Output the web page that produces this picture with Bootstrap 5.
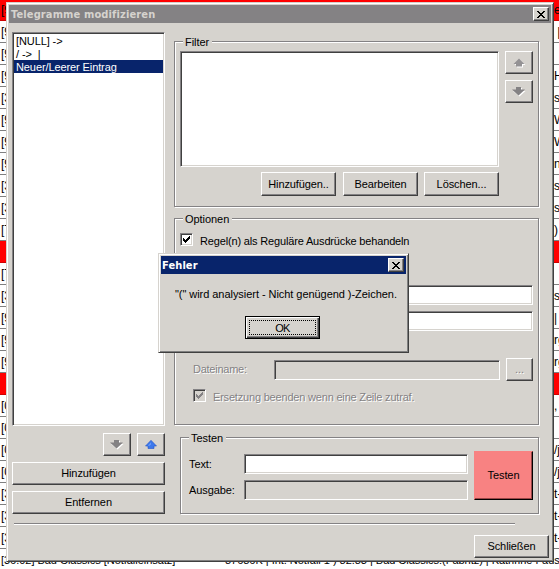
<!DOCTYPE html>
<html lang="de">
<head>
<meta charset="utf-8">
<title>Telegramme modifizieren</title>
<link href="https://cdn.jsdelivr.net/npm/bootstrap@5.3.0/dist/css/bootstrap.min.css" rel="stylesheet">
<style>
body{width:559px;height:569px;background:#fff;color:#000;font:11px/13px "Liberation Sans",Arial,sans-serif;letter-spacing:-.16px}
.log{height:569px}
.log-row{height:22px;border-bottom:1px solid #808080;padding:4px 0 0 1px;font-size:12px;line-height:14px;white-space:pre;flex:none;letter-spacing:0}
.log-row:first-child{height:21px;padding-top:3px}
.log-row.alarm{background:#f00;border-color:#d00000}
.log-row:last-child{border:0;font-size:11px;letter-spacing:-.03px}
.lead-cell{width:224px;flex:none}
.tail-cell{width:5px;overflow:visible}
.win{background:#d6d3ce;border:1px solid;border-color:#d6d3ce #404040 #404040 #d6d3ce;box-shadow:inset 1px 1px 0 #fff,inset -1px -1px 0 #808080;padding:2px}
.main-win{left:6px;top:2px;width:548px;height:560px}
.err-win{left:158px;top:253px;width:251px;height:100px}
.bar{height:18px;background:#848284;color:#d6d3ce;font:bold 11px/17px "DejaVu Sans Condensed","DejaVu Sans",sans-serif;letter-spacing:.13px;padding:0 2px 0 2px}
.bar.active{background:#08246b;color:#fff;letter-spacing:.1px;padding-left:1px}
.key{background:#d6d3ce;color:#000;border:1px solid;border-color:#fff #404040 #404040 #fff;box-shadow:inset -1px -1px 0 #848284;border-radius:0;padding:0;font:inherit;letter-spacing:-.1px;height:23px;display:flex;align-items:center;justify-content:center;flex:none}
.key-x{width:16px;height:14px}
.key-arrow{width:28px}
.key-mid{width:75px;height:24px}
.key-dots{width:27px;color:#848284;text-shadow:1px 1px 0 #fff}
.key-test{width:59px;height:49px;background:#f88282;border-color:#f88282 #000 #000 #f88282;box-shadow:inset -1px -1px 0 #9a4646}
.key-ok{width:75px;height:23px;border-color:#000;box-shadow:inset 1px 1px 0 #fff,inset -1px -1px 0 #404040,inset -2px -2px 0 #848284;padding:3px;position:relative;left:-1px}
.key-ok span{border:1px dotted #000;width:100%;height:100%;line-height:14px;text-align:center;letter-spacing:-.8px}
.well{background:#fff;border:1px solid;border-color:#848284 #fff #fff #848284;box-shadow:inset 1px 1px 0 #404040,inset -1px -1px 0 #d6d3ce;flex:none}
.well.off{background:#d6d3ce}
.line-in{height:20px}
.content-row{margin-left:-1px}
.left-col{width:153px;flex:none;margin-right:9px;padding-top:9px}
.list{height:394px;padding:1px;letter-spacing:-.1px}
.list div{height:13px;padding-left:2px;line-height:14px;white-space:pre}
.list .sel{background:#08246b;color:#fff}
.arrows{gap:6px;margin-top:7px}
.wide{margin-top:6px}
.right-col{width:365px;padding-top:18px}
.etched{border:1px solid #848284;box-shadow:1px 1px 0 #fff,inset 1px 1px 0 #fff}
.cap{height:14px;line-height:15px;margin:-7px 0 0 8px;padding:0 3px 0 2px;background:#d6d3ce;align-self:flex-start;letter-spacing:-.05px}
.g1{height:166px}
.g2{height:207px;margin-top:11px}
.g3{height:77px;margin:12px 0 0 6px}
.tick{width:13px;height:13px;display:block}
.faded{color:#848284;text-shadow:1px 1px 0 #fff}
.rule{height:2px;width:501px;background:linear-gradient(#848284 50%,#fff 50%);margin:9px 0 0 5px}
.g1-top{padding:2px 0 0 5px}
.area{width:319px;height:116px}
.g1-arrows{gap:6px;margin-left:6px}
.g1-keys{padding:5px 0 0 86px;gap:7px}
.g1-keys .key:last-child{margin-left:-1px}
.opt1{height:13px;margin:7px 0 0 5px}
.opt-text{margin-left:7px;padding-top:3px}
.opt-in1{width:259px;margin:39px 0 0 99px}
.opt-in2{width:259px;margin:6px 0 0 99px}
.file{height:23px;margin:27px 0 0 18px}
.file-label{width:81px;letter-spacing:-.25px}
.file-in{width:226px;margin-right:6px}
.opt2{height:13px;margin:8px 0 0 18px}
.opt2-text{margin-left:7px;padding-top:3px;letter-spacing:-.19px}
.g3-body{padding:6px 0 0 8px}
.g3-rows{gap:6px;padding-top:3px;margin-right:6px}
.g3-label{width:55px;letter-spacing:-.1px}
.g3-in{width:224px}
.foot{padding:10px 2px 0 0}
.close-key{height:23px}
.err-text{padding:14px 0 0 14px;height:42px;white-space:nowrap;letter-spacing:-.05px}
</style>
<script src="https://cdn.jsdelivr.net/npm/bootstrap@5.3.0/dist/js/bootstrap.bundle.min.js"></script>
</head>
<body class="position-relative overflow-hidden">
<div class="log d-flex flex-column overflow-hidden">
<div class="log-row alarm d-flex justify-content-between"><span>[9</span><span class="tail-cell">e</span></div>
<div class="log-row d-flex justify-content-between"><span>[9</span><span class="tail-cell"> |</span></div>
<div class="log-row d-flex justify-content-between"><span>[9</span></div>
<div class="log-row d-flex justify-content-between"><span>[9</span><span class="tail-cell">H</span></div>
<div class="log-row d-flex justify-content-between"><span>[3</span><span class="tail-cell">st</span></div>
<div class="log-row d-flex justify-content-between"><span>[9</span><span class="tail-cell">W</span></div>
<div class="log-row d-flex justify-content-between"><span>[9</span><span class="tail-cell">W</span></div>
<div class="log-row d-flex justify-content-between"><span>[9</span><span class="tail-cell">n</span></div>
<div class="log-row d-flex justify-content-between"><span>[3</span><span class="tail-cell">s</span></div>
<div class="log-row d-flex justify-content-between"><span>[3</span><span class="tail-cell">s</span></div>
<div class="log-row d-flex justify-content-between"><span>[7</span><span class="tail-cell">)</span></div>
<div class="log-row alarm"></div>
<div class="log-row d-flex justify-content-between"><span>[7</span></div>
<div class="log-row d-flex justify-content-between"><span>[3</span><span class="tail-cell">s</span></div>
<div class="log-row d-flex justify-content-between"><span>[9</span><span class="tail-cell">|</span></div>
<div class="log-row d-flex justify-content-between"><span>[9</span><span class="tail-cell">rg</span></div>
<div class="log-row d-flex justify-content-between"><span>[9</span><span class="tail-cell">rg</span></div>
<div class="log-row alarm"></div>
<div class="log-row d-flex justify-content-between"><span>[0</span><span class="tail-cell">,</span></div>
<div class="log-row d-flex justify-content-between"><span>[0</span></div>
<div class="log-row d-flex justify-content-between"><span>[0</span><span class="tail-cell">/j</span></div>
<div class="log-row d-flex justify-content-between"><span>[0</span><span class="tail-cell">/j</span></div>
<div class="log-row d-flex justify-content-between"><span>[3</span><span class="tail-cell">t-</span></div>
<div class="log-row d-flex justify-content-between"><span>[3</span><span class="tail-cell">t-</span></div>
<div class="log-row d-flex justify-content-between"><span>[3</span><span class="tail-cell">t-</span></div>
<div class="log-row d-flex"><span class="lead-cell">[36.02] Bad Classics [Notfalleinsatz]</span><span>87686K | Int. Notfall 1 ) 82.83 | Bad Classics:(Fabritz) | Kathrine Faust-</span></div>
</div>

<div class="win main-win position-absolute">
  <div class="bar d-flex justify-content-between align-items-center"><span>Telegramme modifizieren</span>
    <button class="key key-x" aria-label="Schließen"><svg width="8" height="7" viewBox="0 0 8 7" shape-rendering="crispEdges"><path d="M0 0h2v1h1v1h2v-1h1v-1h2v1h-1v1h-1v1h-1v1h1v1h1v1h1v1h-2v-1h-1v-1h-2v1h-1v1h-2v-1h1v-1h1v-1h1v-1h-1v-1h-1v-1h-1z"/></svg></button>
  </div>
  <div class="content-row d-flex">
    <div class="left-col d-flex flex-column ms-1">
      <div class="well list"><div>[NULL] -&gt;</div><div>/ -&gt;  |</div><div class="sel">Neuer/Leerer Eintrag</div></div>
      <div class="arrows d-flex justify-content-end">
        <button class="key key-arrow" aria-label="Nach unten"><svg width="14" height="10" viewBox="0 0 14 10"><path d="M5 1h5v3h3.500L7.500 9.500 1 4h4z" fill="#fff"/><path d="M4 0h5v2.500h4L6.500 8.500 0 2.500h4z" fill="#848284"/></svg></button>
        <button class="key key-arrow" aria-label="Nach oben"><svg width="12" height="9" viewBox="0 0 12 9"><path d="M6 .3 11.500 6H9v2.500H3V6H.5z" fill="#3c78ec" stroke="#2454c8" stroke-width=".6"/><path d="M3 5.500 6 2.500v2L4 6z" fill="#6a9cfa"/></svg></button>
      </div>
      <button class="key wide">Hinzufügen</button>
      <button class="key wide">Entfernen</button>
    </div>
    <div class="right-col d-flex flex-column">
      <div class="etched g1 d-flex flex-column">
        <div class="cap">Filter</div>
        <div class="g1-top d-flex">
          <div class="well area"></div>
          <div class="d-flex flex-column g1-arrows">
            <button class="key key-arrow" aria-label="Filter nach oben"><svg width="13" height="10" viewBox="0 0 13 10"><path d="M7 1.500 12.500 7H10v2.500H4V7H1.500z" fill="#fff"/><path d="M6 .5 11.500 6H9v2.500H3V6H.5z" fill="#949294"/></svg></button>
            <button class="key key-arrow" aria-label="Filter nach unten"><svg width="14" height="10" viewBox="0 0 14 10"><path d="M5 1h5v3h3.500L7.500 9.500 1 4h4z" fill="#fff"/><path d="M4 0h5v2.500h4L6.500 8.500 0 2.500h4z" fill="#848284"/></svg></button>
          </div>
        </div>
        <div class="g1-keys d-flex">
          <button class="key key-mid">Hinzufügen..</button><button class="key key-mid">Bearbeiten</button><button class="key key-mid">Löschen...</button>
        </div>
      </div>
      <div class="etched g2 d-flex flex-column">
        <div class="cap">Optionen</div>
        <div class="opt1 d-flex align-items-center"><span class="well tick"><svg class="d-block" width="11" height="11" viewBox="0 0 11 11" shape-rendering="crispEdges"><path d="M2 4h1v1h1v1h1v-1h1v-1h1v-1h1v-1h1v3h-1v1h-1v1h-1v1h-1v1h-1v-1h-1v-1h-1z"/></svg></span><span class="opt-text">Regel(n) als Reguläre Ausdrücke behandeln</span></div>
        <div class="well line-in opt-in1"></div>
        <div class="well line-in opt-in2"></div>
        <div class="file d-flex align-items-center"><span class="faded file-label">Dateiname:</span><div class="well off line-in file-in"></div><button class="key key-dots">...</button></div>
        <div class="opt2 d-flex align-items-center"><span class="well off tick"><svg class="d-block" width="11" height="11" viewBox="0 0 11 11" shape-rendering="crispEdges"><path fill="#848284" d="M2 4h1v1h1v1h1v-1h1v-1h1v-1h1v-1h1v3h-1v1h-1v1h-1v1h-1v1h-1v-1h-1v-1h-1z"/></svg></span><span class="faded opt2-text">Ersetzung beenden wenn eine Zeile zutraf.</span></div>
      </div>
      <div class="etched g3 d-flex flex-column">
        <div class="cap">Testen</div>
        <div class="g3-body d-flex">
          <div class="g3-rows d-flex flex-column">
            <div class="d-flex align-items-center"><span class="g3-label">Text:</span><div class="well line-in g3-in"></div></div>
            <div class="d-flex align-items-center"><span class="g3-label">Ausgabe:</span><div class="well off line-in g3-in"></div></div>
          </div>
          <button class="key key-test">Testen</button>
        </div>
      </div>
    </div>
  </div>
  <div class="rule"></div>
  <div class="d-flex justify-content-end foot"><button class="key key-mid close-key">Schließen</button></div>
</div>

<div class="win err-win position-absolute">
  <div class="bar active d-flex justify-content-between align-items-center"><span>Fehler</span>
    <button class="key key-x" aria-label="Schließen"><svg width="8" height="7" viewBox="0 0 8 7" shape-rendering="crispEdges"><path d="M0 0h2v1h1v1h2v-1h1v-1h2v1h-1v1h-1v1h-1v1h1v1h1v1h1v1h-2v-1h-1v-1h-2v1h-1v1h-2v-1h1v-1h1v-1h1v-1h-1v-1h-1v-1h-1z"/></svg></button>
  </div>
  <div class="err-text">"(" wird analysiert - Nicht genügend )-Zeichen.</div>
  <button class="key key-ok mx-auto"><span>OK</span></button>
</div>
</body>
</html>
